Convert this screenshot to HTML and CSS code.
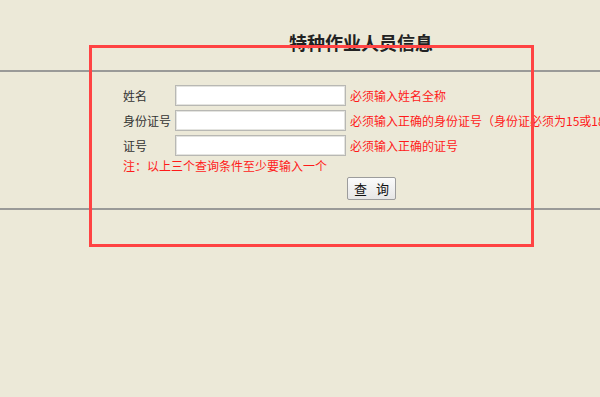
FILE: index.html
```html
<!DOCTYPE html>
<html lang="zh-CN">
<head>
<meta charset="utf-8">
<title>特种作业人员信息</title>
<link rel="stylesheet" href="styles.css">
</head>
<body>
<div class="page">
  <h1 class="title">特种作业人员信息</h1>
  <div class="rule"></div>
  <form class="form">
    <div class="row">
      <span class="label">姓名</span>
      <input class="field" type="text">
      <span class="hint">必须输入姓名全称</span>
    </div>
    <div class="row">
      <span class="label">身份证号</span>
      <input class="field" type="text">
      <span class="hint">必须输入正确的身份证号（身份证必须为15或18位）</span>
    </div>
    <div class="row">
      <span class="label">证号</span>
      <input class="field" type="text">
      <span class="hint">必须输入正确的证号</span>
    </div>
    <div class="note">注：以上三个查询条件至少要输入一个</div>
    <div class="actions">
      <button class="btn" type="button">查&nbsp;询</button>
    </div>
  </form>
  <div class="rule"></div>
  <div class="highlight"></div>
</div>
</body>
</html>
```
FILE: styles.css
```css
html, body {
  margin: 0;
  padding: 0;
}
body {
  background: #ece9d8;
  font-family: "Noto Sans CJK SC", "Liberation Sans", sans-serif;
  font-size: 12px;
  color: #333;
  overflow: hidden;
  width: 600px;
  height: 397px;
}
.page {
  position: relative;
  width: 600px;
  height: 397px;
}
.title {
  margin: 0;
  padding: 31px 0 0 289px;
  height: 70px;
  box-sizing: border-box;
  font-size: 18px;
  line-height: 22px;
  font-weight: 700;
  color: #222;
  letter-spacing: 0;
}
.rule {
  height: 2px;
  background: #9a9a98;
}
.form {
  margin: 0;
  padding: 13px 0 0 123px;
  height: 136px;
  box-sizing: border-box;
}
.row {
  display: flex;
  align-items: center;
  height: 21px;
  margin-bottom: 4px;
  white-space: nowrap;
}
.label {
  width: 52px;
  flex: none;
  color: #333;
  line-height: 21px;
}
.field {
  flex: none;
  width: 171px;
  height: 21px;
  box-sizing: border-box;
  margin: 0;
  padding: 0 3px;
  border: 1px solid #b8b8b4;
  box-shadow: inset 0 0 0 1px #e4e4e0;
  background: #fff;
  font-size: 12px;
}
.hint {
  margin-left: 4px;
  color: #ff1a1a;
  line-height: 21px;
}
.note {
  color: #ff1a1a;
  line-height: 16px;
  margin-top: -2px;
  white-space: nowrap;
}
.actions {
  display: flex;
  padding-left: 224px;
  margin-top: 3px;
}
.btn {
  width: 49px;
  height: 23px;
  margin: 0;
  padding: 0;
  border: 1px solid #9c9c9c;
  border-radius: 2px;
  background: linear-gradient(#fbfbfb, #e6e6e6);
  font-family: "Noto Sans CJK SC", sans-serif;
  font-size: 13px;
  color: #111;
  letter-spacing: 3px;
  text-indent: 3px;
}
.highlight {
  position: absolute;
  left: 89px;
  top: 45px;
  width: 445px;
  height: 202px;
  box-sizing: border-box;
  border: 3px solid #ff4343;
  pointer-events: none;
}
```
